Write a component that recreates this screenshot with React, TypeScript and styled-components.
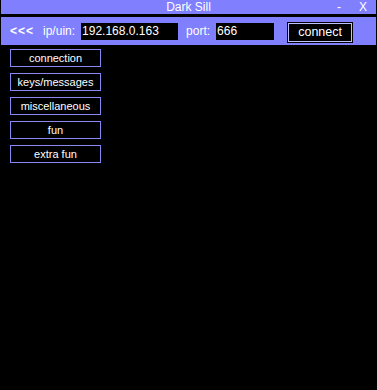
import * as React from 'react';
import styled, { createGlobalStyle } from 'styled-components';

const GlobalStyle = createGlobalStyle`
  html, body {
    margin: 0;
    padding: 0;
    background: #000;
  }
  body {
    font-family: 'Liberation Sans', Arial, sans-serif;
    font-size: 12px;
  }
`;

const menuItems = [
  'connection',
  'keys/messages',
  'miscellaneous',
  'fun',
  'extra fun',
];

const App: React.FC = () => {
  return (
    <>
      <GlobalStyle />
      <Window>
        <TitleBar>
          <Title>Dark Sill</Title>
          <TitleControls>
            <TitleControl>-</TitleControl>
            <TitleControl>X</TitleControl>
          </TitleControls>
        </TitleBar>
        <Toolbar>
          <Back>&lt;&lt;&lt;</Back>
          <Label>ip/uin:</Label>
          <Field width={97} defaultValue="192.168.0.163" />
          <Label>port:</Label>
          <Field width={58} defaultValue="666" />
          <ConnectButton>connect</ConnectButton>
        </Toolbar>
        <Menu>
          {menuItems.map((item) => (
            <MenuButton key={item}>{item}</MenuButton>
          ))}
        </Menu>
      </Window>
    </>
  );
};

export default App;

const Window = styled.div`
  width: 377px;
  height: 390px;
  box-sizing: border-box;
  border-left: 1px solid #000;
  border-right: 1px solid #000;
  background: #000;
  display: flex;
  flex-direction: column;
`;

const TitleBar = styled.div`
  position: relative;
  height: 14px;
  background: #8080ff;
  color: #fff;
  display: flex;
  align-items: center;
  justify-content: center;
  margin-bottom: 3px;
`;

const Title = styled.span`
  font-size: 12px;
  line-height: 14px;
`;

const TitleControls = styled.div`
  position: absolute;
  right: 9px;
  top: 0;
  display: flex;
  gap: 18px;
  line-height: 14px;
`;

const TitleControl = styled.span`
  font-size: 12px;
`;

const Toolbar = styled.div`
  height: 28px;
  background: #8080ff;
  display: flex;
  align-items: center;
  padding-left: 9px;
  color: #fff;
`;

const Back = styled.span`
  font-weight: bold;
  font-size: 12px;
  letter-spacing: 1px;
  margin-right: 9px;
`;

const Label = styled.span`
  font-size: 12px;
  margin-right: 6px;
`;

const Field = styled.input<{ width: number }>`
  width: ${(p) => p.width}px;
  height: 17px;
  box-sizing: border-box;
  border: none;
  background: #000;
  color: #fff;
  font-family: 'Liberation Sans', Arial, sans-serif;
  font-size: 12px;
  padding: 0 1px;
  margin-right: 8px;
  outline: none;
`;

const ConnectButton = styled.button`
  margin-left: 5px;
  margin-top: 2px;
  width: 66px;
  height: 21px;
  box-sizing: border-box;
  background: #000;
  color: #fff;
  border: 1px solid #000;
  box-shadow: inset 0 0 0 1px #c0c0ff;
  font-family: 'Liberation Sans', Arial, sans-serif;
  font-size: 12.5px;
  padding: 0;
`;

const Menu = styled.div`
  display: flex;
  flex-direction: column;
  gap: 6px;
  padding: 4px 0 0 9px;
`;

const MenuButton = styled.button`
  width: 91px;
  height: 18px;
  box-sizing: border-box;
  background: #000;
  color: #fff;
  border: 1px solid #8888f0;
  font-family: 'Liberation Sans', Arial, sans-serif;
  font-size: 11px;
  padding: 0;
`;
